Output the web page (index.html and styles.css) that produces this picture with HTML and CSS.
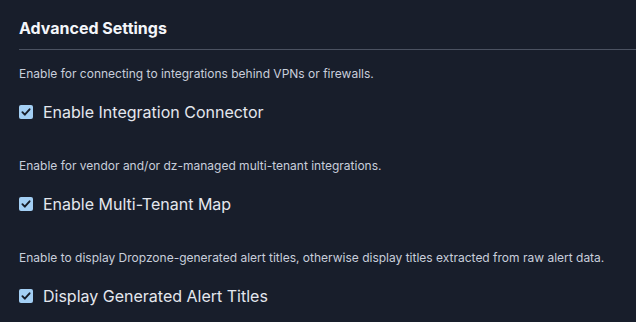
FILE: index.html
```html
<!DOCTYPE html>
<html>
<head>
  <title>Advanced Settings</title>
  <link rel="stylesheet" href="styles.css">
</head>
<body>
  <h3>Advanced Settings</h3>

  <div class="setting">
    <p class="hint">Enable for connecting to integrations behind VPNs or firewalls.</p>
    <label class="check">
      <input type="checkbox" checked>
      <span>Enable Integration Connector</span>
    </label>
  </div>

  <div class="setting">
    <p class="hint">Enable for vendor and/or dz-managed multi-tenant integrations.</p>
    <label class="check">
      <input type="checkbox" checked>
      <span>Enable Multi-Tenant Map</span>
    </label>
  </div>

  <div class="setting">
    <p class="hint">Enable to display Dropzone-generated alert titles, otherwise display titles extracted from raw alert data.</p>
    <label class="check">
      <input type="checkbox" checked>
      <span>Display Generated Alert Titles</span>
    </label>
  </div>
</body>
</html>
```

FILE: styles.css
```css
body {
  margin: 0;
  padding: 16px 0 0 19px;
  background: #181e2b;
  color: #e2e6ee;
  font-family: Inter, "Noto Sans", sans-serif;
  overflow: hidden;
}

h3 {
  margin: 0;
  font-size: 16px;
  font-weight: 700;
  line-height: 24px;
  color: #f4f6fa;
  padding-bottom: 9px;
  border-bottom: 1px solid #4b5261;
}

.setting {
  margin-top: 16px;
}

.setting + .setting {
  margin-top: 34px;
}

.hint {
  margin: 0;
  font-size: 12px;
  line-height: 16px;
  color: #c8cedb;
}

.check {
  display: flex;
  align-items: center;
  gap: 10px;
  margin-top: 18px;
  height: 24px;
  font-size: 16px;
  color: #e4e7ee;
}

.check input {
  appearance: none;
  margin: 0;
  width: 14px;
  height: 14px;
  border-radius: 2px;
  background: #a3cff4 url("data:image/svg+xml,%3Csvg xmlns='http://www.w3.org/2000/svg' viewBox='0 0 14 14'%3E%3Cpath d='M3.4 7.2l2.4 2.5 4.8-5.4' fill='none' stroke='%23161c28' stroke-width='1.9' stroke-linecap='round' stroke-linejoin='round'/%3E%3C/svg%3E") center / 14px 14px no-repeat;
}
```
